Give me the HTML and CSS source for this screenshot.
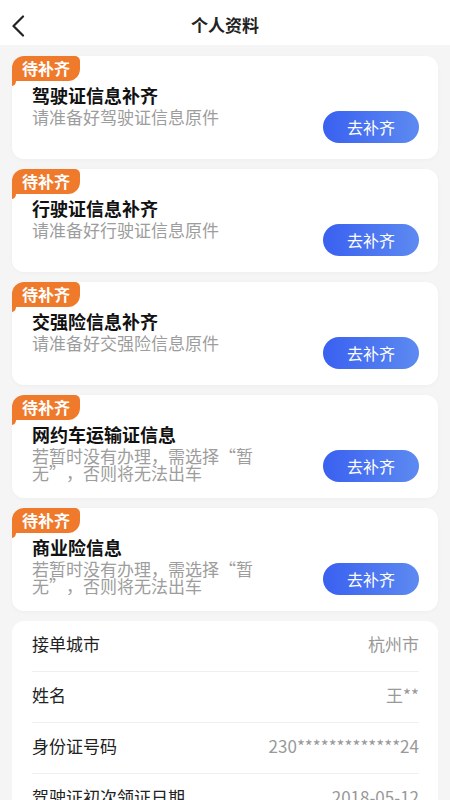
FILE: index.html
```html
<!DOCTYPE html>
<html lang="zh-CN">
<head>
    <meta charset="UTF-8">
    <meta name="viewport" content="width=device-width, initial-scale=1.0">
    <title>个人资料</title>
    <link rel="stylesheet" href="styles.css">
</head>
<body>

    <div class="header">
        <span class="back">
            <svg width="14" height="22" viewBox="0 0 14 22"><path d="M12 1.5 L2.5 11 L12 20.5" fill="none" stroke="#222" stroke-width="2.2" stroke-linecap="round" stroke-linejoin="round"/></svg>
        </span>
        <h1>个人资料</h1>
    </div>

    <div class="page">
        <!-- 待补齐的证件 -->
        <div class="card">
            <div class="tag">待补齐</div>
            <div class="card-body">
                <div class="card-text">
                    <div class="card-title">驾驶证信息补齐</div>
                    <div class="card-sub">请准备好驾驶证信息原件</div>
                </div>
                <button class="btn">去补齐</button>
            </div>
        </div>

        <div class="card">
            <div class="tag">待补齐</div>
            <div class="card-body">
                <div class="card-text">
                    <div class="card-title">行驶证信息补齐</div>
                    <div class="card-sub">请准备好行驶证信息原件</div>
                </div>
                <button class="btn">去补齐</button>
            </div>
        </div>

        <div class="card">
            <div class="tag">待补齐</div>
            <div class="card-body">
                <div class="card-text">
                    <div class="card-title">交强险信息补齐</div>
                    <div class="card-sub">请准备好交强险信息原件</div>
                </div>
                <button class="btn">去补齐</button>
            </div>
        </div>

        <div class="card">
            <div class="tag">待补齐</div>
            <div class="card-body">
                <div class="card-text">
                    <div class="card-title">网约车运输证信息</div>
                    <div class="card-sub">若暂时没有办理，需选择<span class="q q-open">“</span>暂无<span class="q q-close">”</span>，否则将无法出车</div>
                </div>
                <button class="btn">去补齐</button>
            </div>
        </div>

        <div class="card">
            <div class="tag">待补齐</div>
            <div class="card-body">
                <div class="card-text">
                    <div class="card-title">商业险信息</div>
                    <div class="card-sub">若暂时没有办理，需选择<span class="q q-open">“</span>暂无<span class="q q-close">”</span>，否则将无法出车</div>
                </div>
                <button class="btn">去补齐</button>
            </div>
        </div>

        <!-- 基本信息 -->
        <div class="info">
            <div class="info-row">
                <span class="label">接单城市</span>
                <span class="value">杭州市</span>
            </div>
            <div class="info-row">
                <span class="label">姓名</span>
                <span class="value">王**</span>
            </div>
            <div class="info-row">
                <span class="label">身份证号码</span>
                <span class="value">230*************24</span>
            </div>
            <div class="info-row">
                <span class="label">驾驶证初次领证日期</span>
                <span class="value">2018-05-12</span>
            </div>
        </div>
    </div>

</body>
</html>
```

FILE: styles.css
```css
body {
    margin: 0;
    background: #f5f5f6;
    font-family: "Noto Sans CJK SC", "Noto Sans", sans-serif;
    color: #222;
}

.header {
    height: 45px;
    background: #fff;
    display: flex;
    align-items: center;
    justify-content: center;
    position: relative;
}

.header h1 {
    margin: 0;
    font-size: 17px;
    font-weight: bold;
    line-height: 1;
    padding-top: 3px;
}

.back {
    position: absolute;
    left: 11px;
    top: 15px;
    display: flex;
}

.page {
    padding: 11px 12px 20px;
}

.card {
    background: #fff;
    border-radius: 12px;
    margin-bottom: 10px;
    padding-bottom: 16px;
    box-shadow: 0 1px 4px rgba(0, 0, 0, 0.03);
}

.tag {
    display: inline-block;
    position: relative;
    height: 25px;
    line-height: 25px;
    padding: 0 10px;
    background: #ef7a2c;
    color: #fff;
    font-size: 16px;
    font-weight: bold;
    border-radius: 12px 5px 12px 0;
}

.tag::after {
    content: "";
    position: absolute;
    left: 0;
    top: 25px;
    width: 4px;
    height: 5px;
    background: #ef7a2c;
    border-bottom-right-radius: 4px 5px;
}

.card-body {
    display: flex;
    justify-content: space-between;
    align-items: flex-end;
    min-height: 59px;
    margin-top: 3px;
    padding: 0 19px 0 20px;
}

.card-text {
    width: 232px;
    align-self: flex-start;
}

.card-title {
    font-size: 18px;
    font-weight: bold;
    line-height: 23px;
    color: #111;
}

.card-sub {
    font-size: 17px;
    line-height: 17px;
    margin-top: 1px;
    color: #9d9d9d;
}

/* 全角引号 */
.q {
    display: inline-block;
    width: 17px;
}

.q-open {
    text-align: right;
}

.q-close {
    text-align: left;
}

.btn {
    width: 96px;
    height: 32px;
    border: none;
    border-radius: 16px;
    background: linear-gradient(90deg, #3a60f0, #5d8af1);
    color: #fff;
    font-family: inherit;
    font-size: 16px;
    padding: 0;
}

.info {
    background: #fff;
    border-radius: 12px;
    padding: 0 19px 0 20px;
}

.info-row {
    box-sizing: border-box;
    height: 51px;
    padding-bottom: 5px;
    display: flex;
    align-items: center;
    justify-content: space-between;
    border-bottom: 1px solid #f0f0f0;
    font-size: 17px;
}

.label {
    color: #222;
}

.value {
    color: #999;
}
```
